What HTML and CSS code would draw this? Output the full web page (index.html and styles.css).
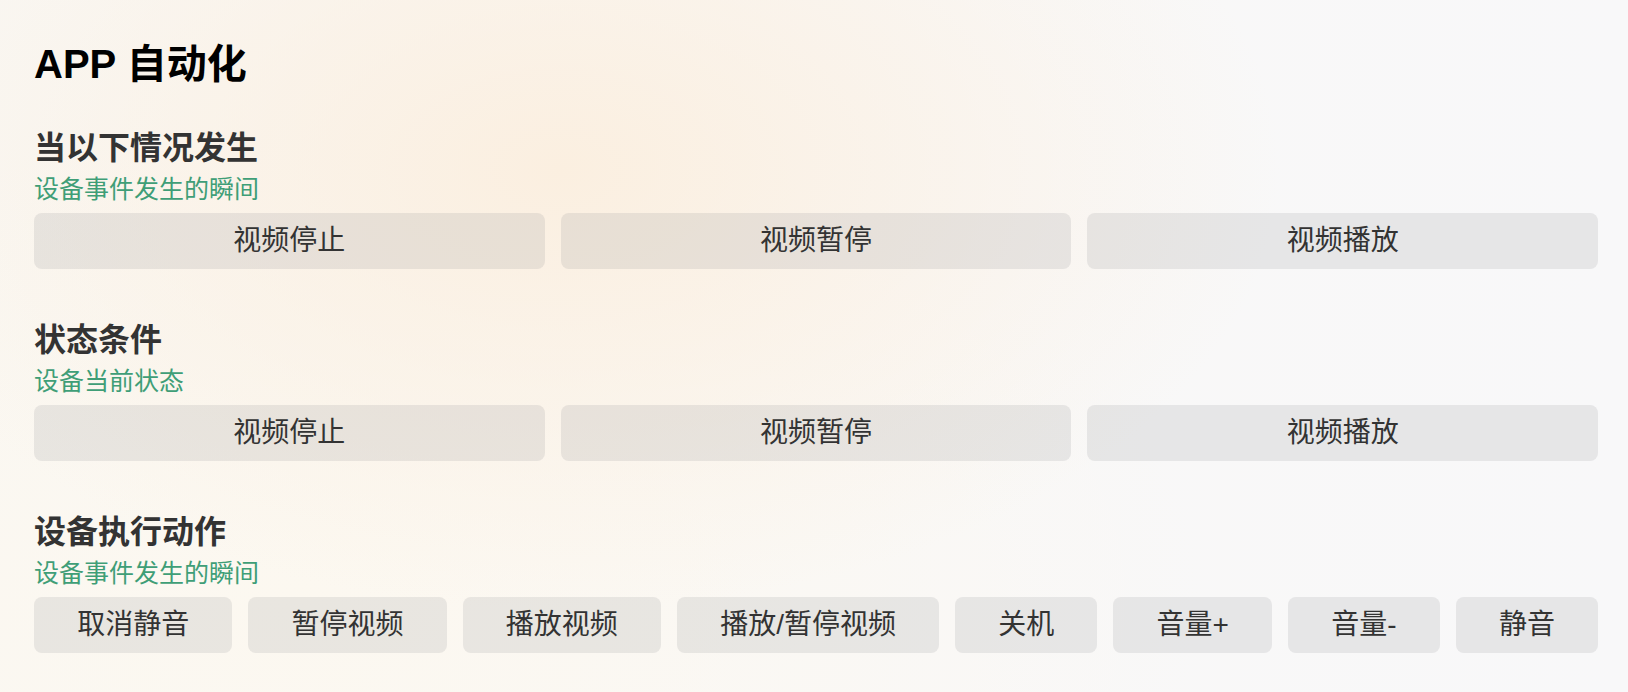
FILE: index.html
```html
<!DOCTYPE html>
<html lang="zh-CN">
<head>
<meta charset="utf-8">
<title>APP 自动化</title>
<link rel="stylesheet" href="styles.css">
</head>
<body>
<main class="page">
  <h1 class="title">APP 自动化</h1>

  <section class="section">
    <h2 class="section-title">当以下情况发生</h2>
    <p class="section-sub">设备事件发生的瞬间</p>
    <div class="grid3">
      <button class="chip">视频停止</button>
      <button class="chip">视频暂停</button>
      <button class="chip">视频播放</button>
    </div>
  </section>

  <section class="section">
    <h2 class="section-title">状态条件</h2>
    <p class="section-sub">设备当前状态</p>
    <div class="grid3">
      <button class="chip">视频停止</button>
      <button class="chip">视频暂停</button>
      <button class="chip">视频播放</button>
    </div>
  </section>

  <section class="section">
    <h2 class="section-title">设备执行动作</h2>
    <p class="section-sub">设备事件发生的瞬间</p>
    <div class="flexrow">
      <button class="chip grow">取消静音</button>
      <button class="chip grow">暂停视频</button>
      <button class="chip grow">播放视频</button>
      <button class="chip grow">播放/暂停视频</button>
      <button class="chip grow">关机</button>
      <button class="chip grow">音量+</button>
      <button class="chip grow">音量-</button>
      <button class="chip grow">静音</button>
    </div>
  </section>
</main>
</body>
</html>
```

FILE: styles.css
```css
html, body {
  margin: 0;
  padding: 0;
  height: 100%;
}

body {
  font-family: "Liberation Sans", "Noto Sans CJK SC", sans-serif;
  color: #333;
  background:
    radial-gradient(ellipse 720px 440px at 560px 170px, rgba(251, 239, 224, 1) 0%, rgba(251, 239, 224, 0) 100%),
    radial-gradient(ellipse 900px 500px at 300px 600px, rgba(252, 248, 240, 1) 0%, rgba(252, 248, 240, 0) 100%),
    linear-gradient(to right, #f9f7f3 0%, #f9f8f7 50%, #f8f8f9 100%);
  min-height: 692px;
}

.page {
  padding: 40px 30px 0 34px;
}

.title {
  margin: 0;
  font-size: 40px;
  line-height: 48px;
  font-weight: 700;
  color: #000;
}

.section {
  margin-top: 40px;
}

.section + .section {
  margin-top: 51px;
}

.section-title {
  margin: 0;
  font-size: 32px;
  line-height: 40px;
  font-weight: 700;
  color: #333;
}

.section-sub {
  margin: 5px 0 0;
  font-size: 25px;
  line-height: 32px;
  color: #3f9e77;
}

.grid3 {
  margin-top: 8px;
  display: grid;
  grid-template-columns: 1fr 1fr 1fr;
  gap: 16px;
}

.flexrow {
  margin-top: 8px;
  display: flex;
  gap: 16px;
}

.chip {
  height: 56px;
  border: none;
  border-radius: 8px;
  background: rgba(118, 118, 128, 0.14);
  font-family: "Liberation Sans", "Noto Sans CJK SC", sans-serif;
  font-size: 28px;
  line-height: 56px;
  color: #333;
  padding: 0 16px;
  white-space: nowrap;
}

.grow {
  flex: 1 1 auto;
}
```
